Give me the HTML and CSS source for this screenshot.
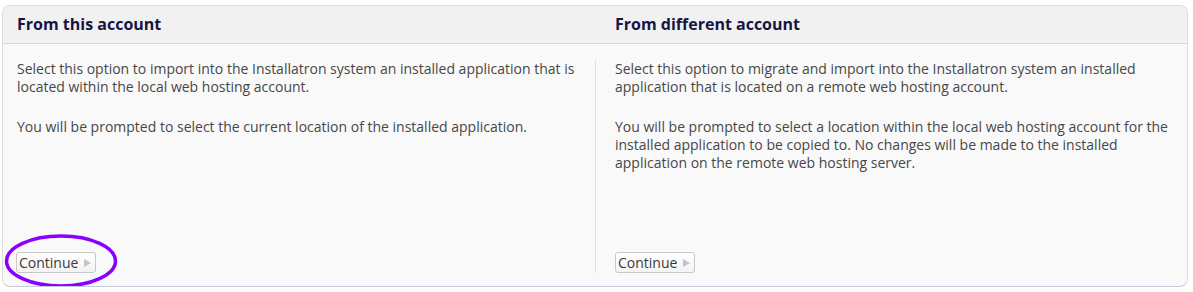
FILE: index.html
```html
<!DOCTYPE html>
<html>
<head>
<meta charset="utf-8">
<link rel="stylesheet" href="styles.css">
</head>
<body>
<div class="panel">
  <div class="head">
    <h2 class="title title-left">From this account</h2>
    <h2 class="title title-right">From different account</h2>
  </div>
  <div class="body">
    <div class="col col-left">
      <div class="content">
        <div class="texts">
          <p class="text">Select this option to import into the Installatron system an installed application that is located within the local web hosting account.</p>
          <p class="text">You will be prompted to select the current location of the installed application.</p>
        </div>
        <button class="btn">Continue <svg class="arrow" width="7" height="8" viewBox="0 0 7 8"><path d="M0 0 L7 4 L0 8 Z" fill="#c4c4c4"/></svg></button>
      </div>
      <svg class="circle" width="120" height="58" viewBox="0 0 120 58"><ellipse cx="58" cy="29" rx="54.5" ry="25" fill="none" stroke="#8a00ff" stroke-width="3.5"/></svg>
    </div>
    <div class="col col-right">
      <div class="content divided">
        <div class="texts">
          <p class="text">Select this option to migrate and import into the Installatron system an installed application that is located on a remote web hosting account.</p>
          <p class="text">You will be prompted to select a location within the local web hosting account for the installed application to be copied to. No changes will be made to the installed application on the remote web hosting server.</p>
        </div>
        <button class="btn">Continue <svg class="arrow" width="7" height="8" viewBox="0 0 7 8"><path d="M0 0 L7 4 L0 8 Z" fill="#c4c4c4"/></svg></button>
      </div>
    </div>
  </div>
</div>
</body>
</html>
```
FILE: styles.css
```css
html, body {
  margin: 0;
  padding: 0;
  background: #ffffff;
}
body {
  font-family: "Open Sans", "DejaVu Sans", sans-serif;
}
.panel {
  margin: 5px 5px 0 2px;
  width: 1186px;
  height: 282px;
  box-sizing: border-box;
  border: 1px solid #dcdcdc;
  border-bottom-color: #c3c9d6;
  border-radius: 8px;
  background: #f9f9f9;
  overflow: hidden;
}
.head {
  display: grid;
  grid-template-columns: 592px 592px;
  height: 38px;
  background: #f1f1f1;
  border-bottom: 1px solid #d8d8d8;
  box-sizing: border-box;
}
.title {
  margin: 0;
  font-size: 16px;
  font-weight: 700;
  color: #161645;
  line-height: 36px;
}
.title-left { padding-left: 14px; }
.title-right { padding-left: 20px; }
.body {
  display: grid;
  grid-template-columns: 592px 592px;
  padding: 16px 0 14px;
}
.col {
  position: relative;
}
.col-left {
  padding: 0 14px 0 13px;
}
.col-right {
  padding: 0 14px 0 0;
}
.content {
  display: flex;
  flex-direction: column;
  justify-content: space-between;
  align-items: flex-start;
  height: 213px;
}
.divided {
  border-left: 1px solid #dcdfe6;
  padding-left: 19px;
}
.texts {
  display: flex;
  flex-direction: column;
  gap: 22px;
}
.col-left .text { padding-left: 1px; }
.text {
  margin: 0;
  font-size: 14px;
  line-height: 18px;
  color: #474747;
}
.btn {
  font-family: "Open Sans", "DejaVu Sans", sans-serif;
  font-size: 14px;
  color: #3a3a3a;
  height: 21px;
  padding: 0 4px 0 2px;
  border: 1px solid #c8c8c8;
  border-radius: 3px;
  background: linear-gradient(#ffffff, #f3f3f3);
  display: flex;
  align-items: center;
  gap: 6px;
  line-height: 19px;
}
.arrow {
  display: block;
}
.circle {
  position: absolute;
  left: 0;
  top: 172px;
}
```
